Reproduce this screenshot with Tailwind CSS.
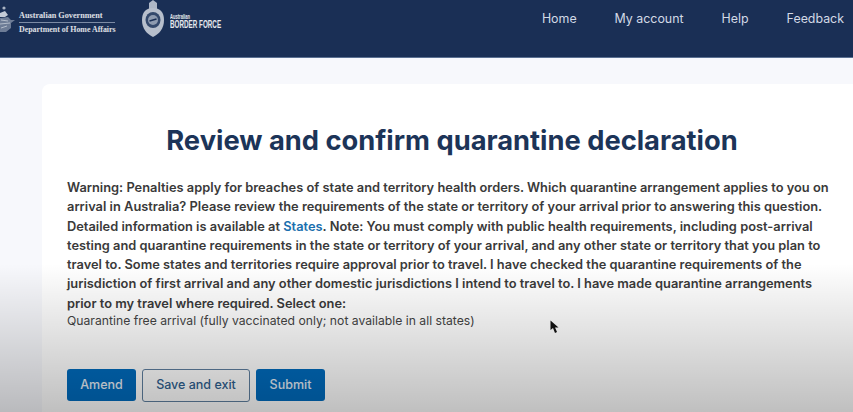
<!DOCTYPE html>
<html lang="en">
<head>
  <meta charset="UTF-8">
  <meta name="viewport" content="width=device-width, initial-scale=1.0">
  <title>Review and confirm quarantine declaration</title>
  <script src="https://cdn.jsdelivr.net/npm/@tailwindcss/browser@4"></script>
</head>
<body class="relative w-[853px] h-[412px] overflow-hidden bg-[#f7f8fc] font-['Inter',sans-serif]">

  <!-- Header -->
  <header class="h-[58px] bg-[#1a2f55] border-b border-[#5a7092] flex items-start justify-between">
    <div class="flex items-start">
      <!-- Coat of arms -->
      <svg class="w-[16px] h-[30px] mt-[5px]" viewBox="0 0 16 30" fill="none">
        <circle cx="4" cy="3" r="1.6" fill="#aab4c4"/>
        <path d="M0 8 L5 6 L8 10 L5 12 L0 12 Z" fill="#c4cbd7"/>
        <path d="M0 13 L8 12 L11 15 L15 15 L11 18 L11 23 L6 27 L0 27 Z" fill="#6d7c96"/>
        <path d="M1 15 L8 16 M0 19 L10 18 M1 23 L7 21" stroke="#b3bcca" stroke-width="1"/>
      </svg>
      <div class="ml-[3px] mt-[10px] w-[96px] font-['Liberation_Serif',serif] font-bold text-white/85">
        <div class="text-[8.2px] leading-[12px] border-b border-[#7c8ba5] pb-[0px] whitespace-nowrap">Australian Government</div>
        <div class="text-[7.9px] leading-[12px] mt-[1px] whitespace-nowrap">Department of Home Affairs</div>
      </div>
      <!-- Border Force crest -->
      <svg class="w-[24px] h-[38px] ml-[26px]" viewBox="0 0 24 38" fill="none">
        <path d="M8 3 L12 0 L16 3 L16 9 L8 9 Z" fill="#aeb7c6"/>
        <path d="M12 8 C19 8 23 12 23 20 C23 29 18 34 12 37 C6 34 1 29 1 20 C1 12 5 8 12 8 Z" fill="#b7bfcc"/>
        <ellipse cx="12" cy="20" rx="7.5" ry="8" fill="#34496c"/>
        <ellipse cx="12" cy="20" rx="5" ry="5" fill="#8e9bb0"/>
        <path d="M8.5 21 L15.5 19" stroke="#1a2f55" stroke-width="1.5"/>
      </svg>
      <div class="ml-[5px] mt-[14px] w-[51px] scale-x-[0.63] origin-left text-white/90 font-['Liberation_Sans',sans-serif] font-bold whitespace-nowrap">
        <div class="text-[6.5px] leading-[6px]">Australian</div>
        <div class="text-[10px] leading-[10px]">BORDER FORCE</div>
      </div>
    </div>
    <nav class="flex gap-[38px] mt-[10px] mr-[9px] text-[12.4px] leading-[18px] text-[#d3dae6]">
      <a>Home</a>
      <a>My account</a>
      <a>Help</a>
      <a>Feedback</a>
    </nav>
  </header>

  <!-- Card -->
  <main class="ml-[42px] mt-[26px] w-[830px] h-[340px] bg-white rounded-tl-lg pt-[39px] pl-[25px]">
    <h1 class="w-[770px] text-center text-[27.3px] leading-[36px] font-bold text-[#1c3458]">Review and confirm quarantine declaration</h1>
    <p class="w-[768px] mt-[19px] text-[12.85px] leading-[19.3px] font-semibold text-[#3a3a3a]">Warning: Penalties apply for breaches of state and territory health orders. Which quarantine arrangement applies to you on arrival in Australia? Please review the requirements of the state or territory of your arrival prior to answering this question. Detailed information is available at <a class="text-[#1a6fae]">States</a>. Note: You must comply with public health requirements, including post-arrival testing and quarantine requirements in the state or territory of your arrival, and any other state or territory that you plan to travel to. Some states and territories require approval prior to travel. I have checked the quarantine requirements of the jurisdiction of first arrival and any other domestic jurisdictions I intend to travel to. I have made quarantine arrangements prior to my travel where required. Select one:</p>
    <p class="-mt-[2px] text-[12.2px] leading-[19px] text-[#444]">Quarantine free arrival (fully vaccinated only; not available in all states)</p>
    <div class="flex gap-[6px] mt-[39px]">
      <button class="h-[32px] w-[69px] rounded-[3px] bg-[#006bbd] text-[12.5px] font-medium text-[#e6eef7]">Amend</button>
      <button class="h-[33px] w-[108px] rounded-[3px] border border-[#5f7f9f] text-[12.5px] font-medium text-[#2f5f8f]">Save and exit</button>
      <button class="h-[32px] w-[69px] rounded-[3px] bg-[#006bbd] text-[12.5px] font-medium text-[#e6eef7]">Submit</button>
    </div>
  </main>

  <!-- Video shade along the bottom -->
  <div class="absolute left-0 right-0 bottom-0 h-[148px] bg-gradient-to-b from-black/0 to-black/25 pointer-events-none"></div>

  <!-- Mouse pointer -->
  <svg class="absolute left-[550px] top-[320px] w-[9px] h-[14px]" viewBox="0 0 9 14">
    <path d="M0.5 0.5 L0.5 10 L3 8 L5 13 L7 12 L5 7.5 L8.5 7.5 Z" fill="#111"/>
  </svg>
</body>
</html>
